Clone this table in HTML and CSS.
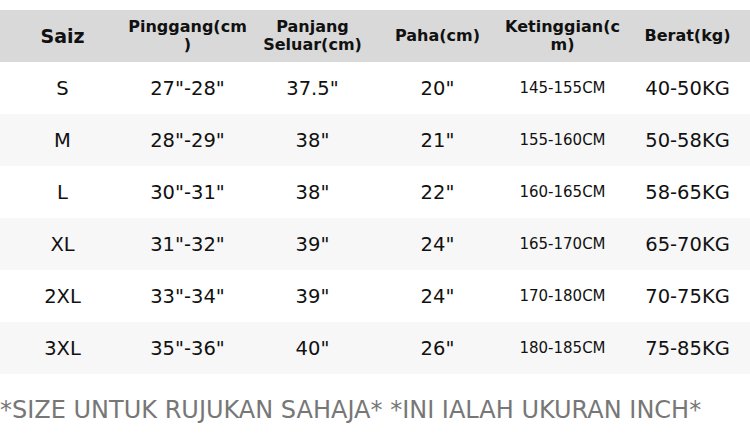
FILE: index.html
```html
<!DOCTYPE html>
<html>
<head>
<meta charset="utf-8">
<link rel="stylesheet" href="styles.css">
</head>
<body>
<div class="page">
  <table class="size-table">
    <thead>
      <tr>
        <th class="h-main">Saiz</th>
        <th>Pinggang(cm)</th>
        <th>Panjang Seluar(cm)</th>
        <th>Paha(cm)</th>
        <th>Ketinggian(cm)</th>
        <th>Berat(kg)</th>
      </tr>
    </thead>
    <tbody>
      <tr><td>S</td><td>27"-28"</td><td>37.5"</td><td>20"</td><td class="small">145-155CM</td><td>40-50KG</td></tr>
      <tr><td>M</td><td>28"-29"</td><td>38"</td><td>21"</td><td class="small">155-160CM</td><td>50-58KG</td></tr>
      <tr><td>L</td><td>30"-31"</td><td>38"</td><td>22"</td><td class="small">160-165CM</td><td>58-65KG</td></tr>
      <tr><td>XL</td><td>31"-32"</td><td>39"</td><td>24"</td><td class="small">165-170CM</td><td>65-70KG</td></tr>
      <tr><td>2XL</td><td>33"-34"</td><td>39"</td><td>24"</td><td class="small">170-180CM</td><td>70-75KG</td></tr>
      <tr><td>3XL</td><td>35"-36"</td><td>40"</td><td>26"</td><td class="small">180-185CM</td><td>75-85KG</td></tr>
    </tbody>
  </table>
  <p class="note">*SIZE UNTUK RUJUKAN SAHAJA* *INI IALAH UKURAN INCH*</p>
</div>
</body>
</html>
```
FILE: styles.css
```css
html, body {
  margin: 0;
  padding: 0;
  background: #ffffff;
}
body {
  font-family: "DejaVu Sans", sans-serif;
  color: #111111;
  width: 750px;
  height: 446px;
  overflow: hidden;
}
.page {
  padding-top: 10px;
}
.size-table {
  width: 750px;
  border-collapse: collapse;
  table-layout: fixed;
}
.size-table th,
.size-table td {
  width: 125px;
  padding: 0 2px;
  text-align: center;
  vertical-align: middle;
  height: 52px;
  box-sizing: border-box;
}
.size-table thead tr {
  background: #d9d9d9;
}
.size-table th {
  font-weight: bold;
  font-size: 16px;
  line-height: 18px;
  overflow-wrap: anywhere;
}
.size-table th.h-main {
  font-size: 19px;
}
.size-table td {
  font-size: 19.5px;
}
.size-table td.small {
  font-size: 15px;
}
.size-table tbody tr:nth-child(even) {
  background: #f7f7f7;
}
.note {
  margin: 22px 0 0 0;
  font-size: 24px;
  line-height: 28px;
  color: #777777;
  white-space: nowrap;
}
```
